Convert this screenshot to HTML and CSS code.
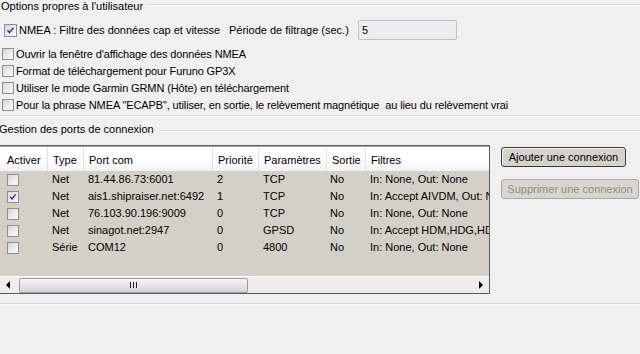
FILE: index.html
```html
<!DOCTYPE html>
<html lang="fr">
<head>
<meta charset="utf-8">
<title>Options</title>
<link rel="stylesheet" href="styles.css">
</head>
<body>
<div class="page">
  <div class="legend legend-top">
    <span class="legend-text">Options propres à l'utilisateur</span>
    <i class="rule"></i>
  </div>

  <div class="nmea-row">
    <span class="cb cb-big checked"><svg viewBox="0 0 13 13"><path d="M3 6.2 L5.3 9 L10 3.2"/></svg></span>
    <span class="lbl lbl-nmea">NMEA : Filtre des données cap et vitesse</span>
    <span class="lbl lbl-period">Période de filtrage (sec.)</span>
    <span class="textbox">5</span>
  </div>

  <div class="opts">
    <div class="opt"><span class="cb"></span><span class="lbl">Ouvrir la fenêtre d'affichage des données NMEA</span></div>
    <div class="opt"><span class="cb"></span><span class="lbl">Format de téléchargement pour Furuno GP3X</span></div>
    <div class="opt"><span class="cb"></span><span class="lbl">Utiliser le mode Garmin GRMN (Hôte) en téléchargement</span></div>
    <div class="opt"><span class="cb"></span><span class="lbl">Pour la phrase NMEA "ECAPB", utiliser, en sortie, le relèvement magnétique&nbsp; au lieu du relèvement vrai</span></div>
  </div>

  <div class="group-end"></div>

  <div class="legend legend-ports">
    <span class="legend-text">Gestion des ports de connexion</span>
    <i class="rule"></i>
  </div>

  <div class="ports">
    <div class="table">
      <div class="thead cols">
        <span>Activer</span><span>Type</span><span>Port com</span><span>Priorité</span><span>Paramètres</span><span>Sortie</span><span>Filtres</span>
      </div>
      <div class="tbody">
        <div class="row cols">
          <span class="c-cb"><span class="cb"></span></span><span>Net</span><span>81.44.86.73:6001</span><span>2</span><span>TCP</span><span>No</span><span>In: None, Out: None</span>
        </div>
        <div class="row cols">
          <span class="c-cb"><span class="cb checked"><svg viewBox="0 0 12 12"><path d="M2.6 5.6 L4.8 8.3 L9.2 2.8"/></svg></span></span><span>Net</span><span>ais1.shipraiser.net:6492</span><span>1</span><span>TCP</span><span>No</span><span>In: Accept AIVDM, Out: None</span>
        </div>
        <div class="row cols">
          <span class="c-cb"><span class="cb"></span></span><span>Net</span><span>76.103.90.196:9009</span><span>0</span><span>TCP</span><span>No</span><span>In: None, Out: None</span>
        </div>
        <div class="row cols">
          <span class="c-cb"><span class="cb"></span></span><span>Net</span><span>sinagot.net:2947</span><span>0</span><span>GPSD</span><span>No</span><span>In: Accept HDM,HDG,HDT</span>
        </div>
        <div class="row cols">
          <span class="c-cb"><span class="cb"></span></span><span>Série</span><span>COM12</span><span>0</span><span>4800</span><span>No</span><span>In: None, Out: None</span>
        </div>
      </div>
      <div class="hscroll">
        <span class="arrow arrow-left"></span>
        <span class="thumb"><span class="grip"></span></span>
        <span class="track-rest"></span>
        <span class="arrow arrow-right"></span>
      </div>
    </div>

    <div class="buttons">
      <button class="btn btn-add" type="button">Ajouter une connexion</button>
      <button class="btn btn-del" type="button" disabled>Supprimer une connexion</button>
    </div>
  </div>

  <div class="bottom-rule"></div>
</div>
</body>
</html>
```

FILE: styles.css
```css
html, body {
  margin: 0;
  padding: 0;
  background: #f0f0f0;
}

body {
  width: 640px;
  height: 354px;
  overflow: hidden;
  font-family: "Liberation Sans", Arial, sans-serif;
  font-size: 11px;
  color: #000;
}

.page {
  display: flex;
  flex-direction: column;
}

/* legends with group line */
.legend {
  display: flex;
  align-items: flex-start;
  height: 13px;
  line-height: 13px;
}

.legend-text {
  white-space: nowrap;
  padding-right: 6px;
}

.rule {
  flex: 1;
  height: 0;
  border-top: 1px solid #d3d9de;
  border-bottom: 1px solid #fbfbfb;
}

.legend-top .legend-text {
  padding-left: 1px;
}

.legend-top .rule {
  margin-top: 4px;
}

.legend-ports {
  margin-top: 6px;
}

.legend-ports .legend-text {
  margin-left: -1px;
}

.legend-ports .rule {
  margin-top: 7px;
}

/* checkboxes */
.cb {
  display: inline-block;
  box-sizing: border-box;
  width: 12px;
  height: 12px;
  border: 1px solid #8c8e90;
  background: linear-gradient(135deg, #d6d6d6 0%, #ececec 55%, #fbfbfb 100%);
  flex: none;
  position: relative;
}

.cb svg {
  display: block;
  width: 100%;
  height: 100%;
}

.cb svg path {
  fill: none;
  stroke: #22359a;
  stroke-width: 1.7;
}

.cb-big {
  width: 13px;
  height: 13px;
}

/* NMEA row */
.nmea-row {
  display: flex;
  align-items: center;
  height: 20px;
  margin-top: 7px;
  padding-left: 4px;
}

.lbl {
  white-space: nowrap;
}

.lbl-nmea {
  width: 210px;
  margin-left: 2px;
}

.lbl-period {
  width: 129px;
}

.textbox {
  box-sizing: border-box;
  width: 99px;
  height: 20px;
  line-height: 18px;
  padding-left: 3px;
  border: 1px solid #bcc2c8;
  border-radius: 2px;
  background: #eceef1;
}

/* option rows */
.opts {
  margin-top: 5px;
  display: flex;
  flex-direction: column;
}

.opt {
  display: flex;
  align-items: center;
  height: 17px;
  padding-left: 2px;
}

.opt .lbl {
  margin-left: 2px;
  letter-spacing: -0.12px;
}

.group-end {
  margin-top: 2px;
  border-top: 1px solid #d3d9de;
  border-bottom: 1px solid #fbfbfb;
}

/* ports */
.ports {
  display: flex;
  align-items: flex-start;
  margin-top: 9px;
}

.table {
  box-sizing: border-box;
  width: 490px;
  height: 149px;
  border: 1px solid #5c5c5c;
  border-left: none;
  background: #d4d0c8;
  display: flex;
  flex-direction: column;
  overflow: hidden;
}

.cols {
  display: grid;
  grid-template-columns: 47px 36px 129px 46px 68px 39px 160px;
}

.cols > span {
  white-space: nowrap;
  overflow: hidden;
}

.thead {
  height: 25px;
  background: linear-gradient(#ffffff 0%, #ffffff 55%, #f1f2f3 100%);
  box-sizing: border-box;
  border-top: 1px solid #a8a8a8;
}

.thead > span {
  padding: 7px 0 0 5px;
  line-height: 13px;
  border-left: 1px solid #e2e3e4;
}

.thead > span:first-child {
  border-left: none;
  padding-left: 7px;
}

.tbody {
  height: 105px;
}

.row {
  height: 17px;
  line-height: 17px;
}

.row > span {
  padding-left: 5px;
}

.row > span:nth-child(6) {
  padding-left: 4px;
}

.row > .c-cb {
  padding-left: 7px;
  display: flex;
  align-items: center;
}

/* horizontal scrollbar */
.hscroll {
  height: 17px;
  box-sizing: border-box;
  display: flex;
  align-items: center;
  background: #eeeeee;
  border-top: 1px solid #ffffff;
}

.arrow {
  width: 19px;
  height: 16px;
  position: relative;
  flex: none;
}

.arrow::after {
  content: "";
  position: absolute;
  top: 4px;
  border-top: 4px solid transparent;
  border-bottom: 4px solid transparent;
}

.arrow-left::after {
  left: 6px;
  border-right: 4px solid #000;
}

.arrow-right::after {
  left: 9px;
  border-left: 4px solid #000;
}

.thumb {
  box-sizing: border-box;
  width: 229px;
  height: 15px;
  border: 1px solid #9a9ca0;
  border-radius: 2px;
  background: linear-gradient(#f6f6f8 0%, #e6e6ea 45%, #d5d6db 100%);
  display: flex;
  align-items: center;
  justify-content: center;
}

.grip {
  width: 7px;
  height: 6px;
  background: linear-gradient(90deg, #222 0, #222 1px, transparent 1px, transparent 3px, #222 3px, #222 4px, transparent 4px, transparent 6px, #222 6px, #222 7px);
}

.track-rest {
  flex: 1;
}

/* buttons */
.buttons {
  display: flex;
  flex-direction: column;
  align-items: flex-start;
  gap: 12px;
  margin-left: 11px;
  margin-top: 2px;
}

.btn {
  box-sizing: border-box;
  height: 20px;
  padding: 0;
  font-family: "Liberation Sans", Arial, sans-serif;
  font-size: 11px;
  line-height: 18px;
  text-align: center;
  border-radius: 3px;
  background: #d6d2ca;
  white-space: nowrap;
}

.btn-add {
  width: 125px;
  color: #000;
  border: 1px solid #3a3a3a;
  box-shadow: inset 1px 1px 0 #f4f3f0;
}

.btn-del {
  width: 138px;
  color: #8c8c8c;
  border: 1px solid #a9a9a9;
  background: #dad6cf;
}

.bottom-rule {
  margin-top: 9px;
  border-top: 1px solid #cfd6dc;
  border-bottom: 1px solid #fbfbfb;
}
```
